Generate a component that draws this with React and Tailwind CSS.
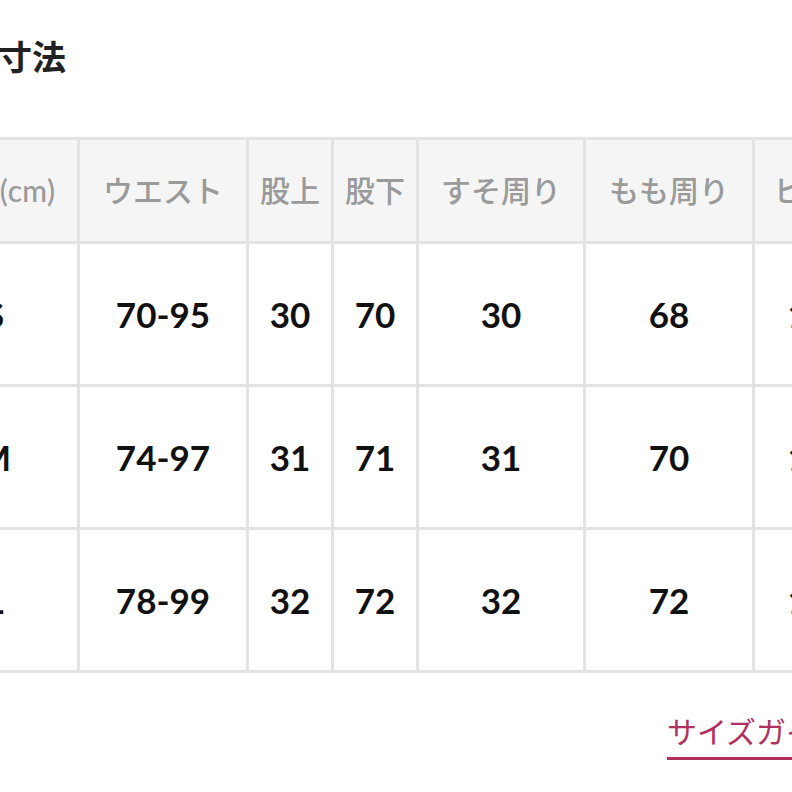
import React from "react";

const headers = ["サイズ(cm)", "ウエスト", "股上", "股下", "すそ周り", "もも周り", "ヒップ", "総丈"];
const rows = [
  ["S", "70-95", "30", "70", "30", "68", "108", "100"],
  ["M", "74-97", "31", "71", "31", "70", "110", "101"],
  ["L", "78-99", "32", "72", "32", "72", "112", "102"],
];

export default function App() {
  return (
    <div
      className="w-[792px] h-[792px] overflow-hidden bg-white flex flex-col"
      style={{ fontFamily: "Lato, 'Noto Sans CJK JP', sans-serif" }}
    >
      <h2 className="ml-[-2px] pt-[33px] text-[34px] leading-[48px] font-bold text-[#222]">
        寸法
      </h2>

      <div className="mt-[56px] ml-[-91px] w-max">
        <div className="grid grid-cols-[165px_166px_82px_82px_164px_166px_126px_166px] gap-[3px] p-[3px] bg-[#e3e3e3]">
          {headers.map((h, i) => (
            <div
              key={h}
              className={
                "h-[101px] bg-[#f5f5f5] flex items-center whitespace-nowrap text-[30px] font-medium text-[#9a9a9a] " +
                (i === 0 ? "justify-end pr-[22px]" : "justify-center")
              }
            >
              <span className="shrink-0">{h}</span>
            </div>
          ))}
          {rows.map((r) =>
            r.map((v, j) => (
              <div
                key={r[0] + j}
                className="h-[140px] bg-white flex items-center justify-center text-[35px] font-bold text-[#111]"
              >
                {v}
              </div>
            ))
          )}
        </div>
      </div>

      <div className="mt-[38px] mr-[-54px] flex justify-end">
        <a className="text-[30px] leading-[40px] text-[#b0305e] underline decoration-[3px] underline-offset-[14px]">
          サイズガイド
        </a>
      </div>
    </div>
  );
}
